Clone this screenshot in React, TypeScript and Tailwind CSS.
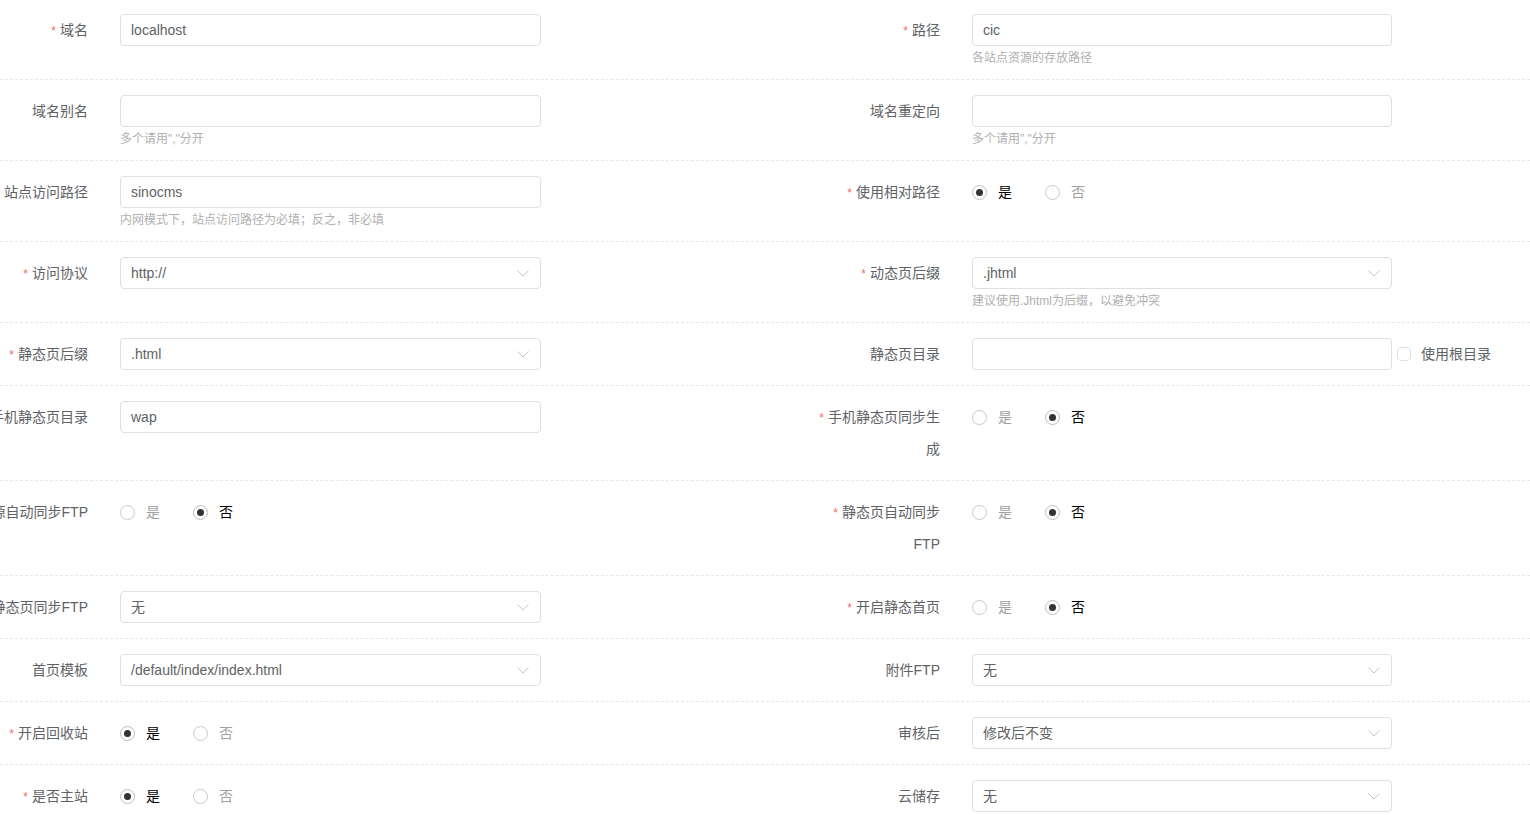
import React from 'react';

type Field = {
  label: string;
  req?: boolean;
  type: 'input' | 'select' | 'radio';
  value: string;
  hint?: string;
  checkbox?: string;
};

type Row = { l: Field; r: Field };

const rows: Row[] = [
  {
    l: { label: '域名', req: true, type: 'input', value: 'localhost' },
    r: { label: '路径', req: true, type: 'input', value: 'cic', hint: '各站点资源的存放路径' },
  },
  {
    l: { label: '域名别名', type: 'input', value: '', hint: '多个请用","分开' },
    r: { label: '域名重定向', type: 'input', value: '', hint: '多个请用","分开' },
  },
  {
    l: { label: '站点访问路径', type: 'input', value: 'sinocms', hint: '内网模式下，站点访问路径为必填；反之，非必填' },
    r: { label: '使用相对路径', req: true, type: 'radio', value: '是' },
  },
  {
    l: { label: '访问协议', req: true, type: 'select', value: 'http://' },
    r: { label: '动态页后缀', req: true, type: 'select', value: '.jhtml', hint: '建议使用.Jhtml为后缀，以避免冲突' },
  },
  {
    l: { label: '静态页后缀', req: true, type: 'select', value: '.html' },
    r: { label: '静态页目录', type: 'input', value: '', checkbox: '使用根目录' },
  },
  {
    l: { label: '手机静态页目录', type: 'input', value: 'wap' },
    r: { label: '手机静态页同步生成', req: true, type: 'radio', value: '否' },
  },
  {
    l: { label: '资源自动同步FTP', type: 'radio', value: '否' },
    r: { label: '静态页自动同步FTP', req: true, type: 'radio', value: '否' },
  },
  {
    l: { label: '静态页同步FTP', type: 'select', value: '无' },
    r: { label: '开启静态首页', req: true, type: 'radio', value: '否' },
  },
  {
    l: { label: '首页模板', type: 'select', value: '/default/index/index.html' },
    r: { label: '附件FTP', type: 'select', value: '无' },
  },
  {
    l: { label: '开启回收站', req: true, type: 'radio', value: '是' },
    r: { label: '审核后', type: 'select', value: '修改后不变' },
  },
  {
    l: { label: '是否主站', req: true, type: 'radio', value: '是' },
    r: { label: '云储存', type: 'select', value: '无' },
  },
];

const Chevron = () => (
  <svg width="12" height="7" viewBox="0 0 12 7" fill="none">
    <polyline points="0.5,0.5 6,6 11.5,0.5" stroke="#c0c4cc" strokeWidth="1" />
  </svg>
);

const Radio = ({ on, text }: { on: boolean; text: string }) => (
  <div className="flex items-center">
    <span
      className={
        on
          ? 'w-[15px] h-[15px] rounded-full border border-[#bdbdbd] flex items-center justify-center'
          : 'w-[15px] h-[15px] rounded-full border border-[#c8c8c8]'
      }
    >
      {on && <span className="w-[7px] h-[7px] rounded-full bg-[#333]" />}
    </span>
    <span className={on ? 'ml-[11px] text-black' : 'ml-[11px] text-[#a0a0a0]'}>{text}</span>
  </div>
);

const Control = ({ f, width }: { f: Field; width: string }) => {
  if (f.type === 'radio') {
    return (
      <div className="h-8 flex items-center gap-[33px]">
        <Radio on={f.value === '是'} text="是" />
        <Radio on={f.value === '否'} text="否" />
      </div>
    );
  }
  return (
    <div>
      <div className="flex items-center">
        <div
          className={`${width} h-8 border border-[#dcdfe6] rounded flex items-center justify-between pl-[10px] pr-[11px] text-[#606266]`}
        >
          <span>{f.value}</span>
          {f.type === 'select' && <Chevron />}
        </div>
        {f.checkbox && (
          <div className="flex items-center ml-[5px]">
            <span className="w-[14px] h-[14px] border border-[#dcdfe6] rounded-sm" />
            <span className="ml-[10px] text-[#606266]">{f.checkbox}</span>
          </div>
        )}
      </div>
      {f.hint && <div className="h-[18px] text-xs leading-[24px] text-[#b0b0b0]">{f.hint}</div>}
    </div>
  );
};

const Label = ({ f, wrap }: { f: Field; wrap: boolean }) => (
  <span className={wrap ? 'block w-[128px] text-right leading-8' : 'whitespace-nowrap leading-8'}>
    {f.req && <span className="text-[#f56c6c] text-xs mr-1">*</span>}
    <span className="text-[#606266]">{f.label}</span>
  </span>
);

export default function App() {
  return (
    <div className="w-full min-h-screen bg-white overflow-hidden text-sm font-['Liberation_Sans','Noto_Sans_CJK_SC',sans-serif]">
      {rows.map((row, i) => (
        <div
          key={i}
          className={`flex border-b border-dashed border-[#e8e8e8] pb-[15px] ${i === 0 ? 'pt-[14px]' : 'pt-[15px]'}`}
        >
          <div className="w-[810px] shrink-0 flex">
            <div className="w-[100px] shrink-0 flex justify-end pr-3">
              <Label f={row.l} wrap={false} />
            </div>
            <div className="ml-5">
              <Control f={row.l} width="w-[421px]" />
            </div>
          </div>
          <div className="flex">
            <div className="w-[142px] shrink-0 flex justify-end pr-3">
              <Label f={row.r} wrap={true} />
            </div>
            <div className="ml-5">
              <Control f={row.r} width="w-[420px]" />
            </div>
          </div>
        </div>
      ))}
    </div>
  );
}
